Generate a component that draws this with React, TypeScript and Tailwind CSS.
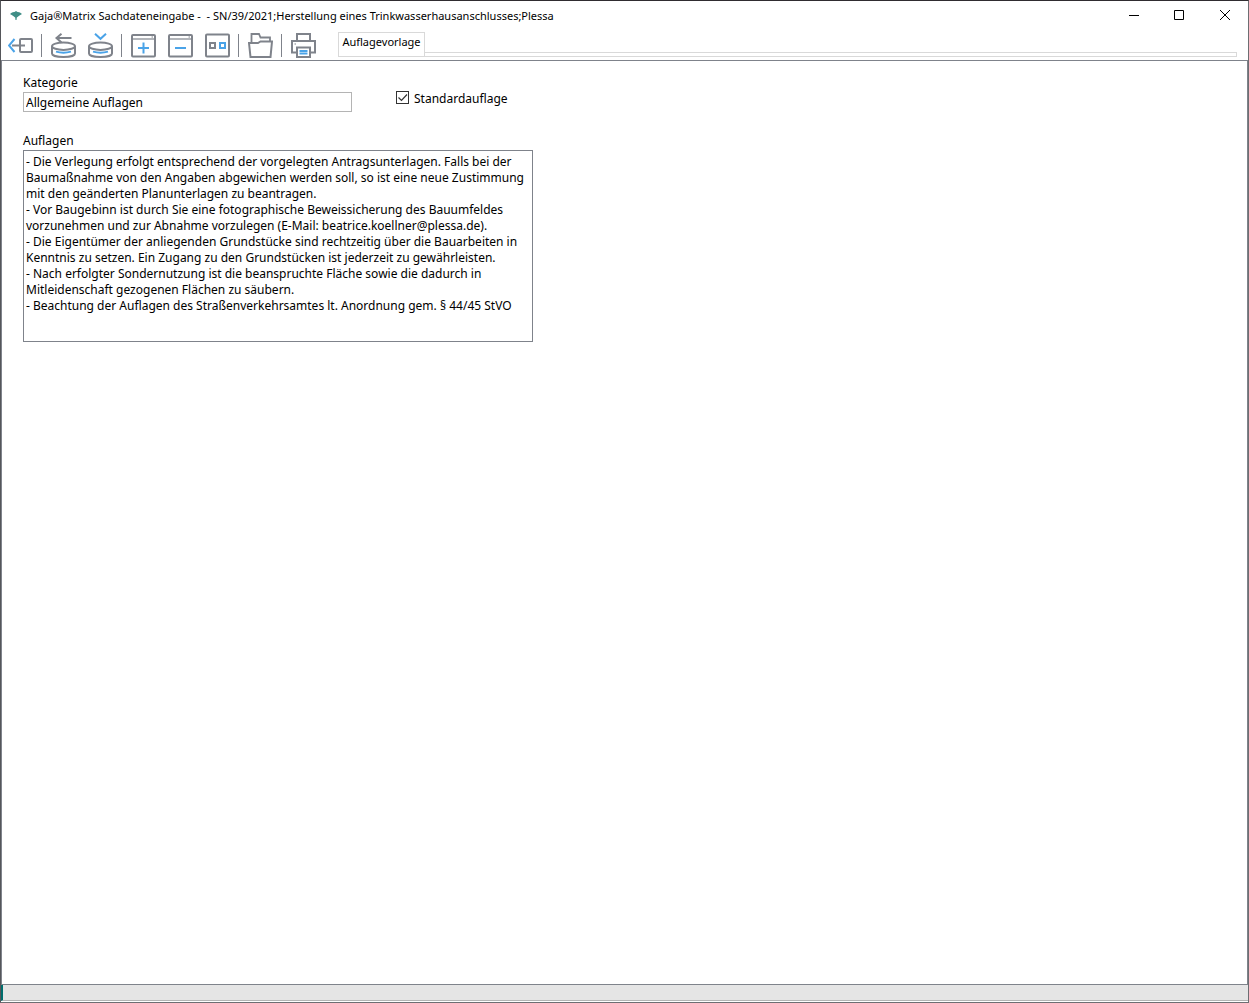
import React, { useState } from 'react';

const GRAY = '#7f838b';
const BLUE = '#4aa3e8';

const initialText = `- Die Verlegung erfolgt entsprechend der vorgelegten Antragsunterlagen. Falls bei der Baumaßnahme von den Angaben abgewichen werden soll, so ist eine neue Zustimmung mit den geänderten Planunterlagen zu beantragen.
- Vor Baugebinn ist durch Sie eine fotographische Beweissicherung des Bauumfeldes vorzunehmen und zur Abnahme vorzulegen (E-Mail: beatrice.koellner@plessa.de).
- Die Eigentümer der anliegenden Grundstücke sind rechtzeitig über die Bauarbeiten in Kenntnis zu setzen. Ein Zugang zu den Grundstücken ist jederzeit zu gewährleisten.
- Nach erfolgter Sondernutzung ist die beanspruchte Fläche sowie die dadurch in Mitleidenschaft gezogenen Flächen zu säubern.
- Beachtung der Auflagen des Straßenverkehrsamtes lt. Anordnung gem. § 44/45 StVO`;

function ToolButton({ label, children }: { label: string; children: React.ReactNode }) {
  return (
    <button type="button" aria-label={label} title={label} className="block h-[25px] w-[25px] shrink-0">
      <svg width="25" height="25" viewBox="0 0 25 25" fill="none" stroke={GRAY} strokeWidth="2">
        {children}
      </svg>
    </button>
  );
}

function Separator() {
  return <div className="mr-[9px] ml-2 h-[23px] w-px shrink-0 bg-[#7f838b]" />;
}

function DatabaseShape() {
  return (
    <>
      <ellipse cx="12.5" cy="13.2" rx="11.5" ry="3.7" />
      <path d="M1 13.2v7.300c0 2 5 3.500 11.500 3.500S24 22.500 24 20.500v-7.300" />
      <path d="M5 18.700c4 1.100 11 1.100 15 0" stroke={BLUE} strokeWidth="1.800" />
    </>
  );
}

function WindowShape() {
  return (
    <>
      <rect x="1" y="2" width="23" height="21.5" rx="1" />
      <path d="M1 6h23" strokeWidth="1.200" />
      <path d="M20.500 4h1.500" strokeWidth="1" />
    </>
  );
}

function TitleBar() {
  return (
    <header className="flex h-[30px] shrink-0 items-center bg-white pl-[9px]">
      <svg width="12" height="10" viewBox="0 0 12 10" className="shrink-0">
        <path d="M0 3C1.500 1.500 3 .8 4.500 1L6 0l1.500 1C9 .8 10.500 1.500 12 3L9.500 4.500 6.800 6.500 6.500 9h-1L5.200 6.500 2.500 4.500z" fill="#3f8e86" />
      </svg>
      <h1 className="ml-2 flex-1 truncate font-['Noto_Sans','Open_Sans',sans-serif] text-[11px] leading-4 whitespace-pre">
        Gaja®Matrix Sachdateneingabe -  - SN/39/2021;Herstellung eines Trinkwasserhausanschlusses;Plessa
      </h1>
      <div className="flex h-[29px] self-start">
        <button type="button" aria-label="Minimieren" className="flex w-[46px] items-center justify-center">
          <svg width="11" height="11" viewBox="0 0 11 11"><path d="M0 5.500h10" stroke="#000" /></svg>
        </button>
        <button type="button" aria-label="Maximieren" className="flex w-[45px] items-center justify-center">
          <svg width="11" height="11" viewBox="0 0 11 11"><path d="M.5.5h9v9h-9z" fill="none" stroke="#000" /></svg>
        </button>
        <button type="button" aria-label="Schließen" className="flex w-[46px] items-center justify-center">
          <svg width="11" height="11" viewBox="0 0 11 11"><path d="M0 0l10 10M10 0L0 10" stroke="#000" /></svg>
        </button>
      </div>
    </header>
  );
}

function Toolbar() {
  return (
    <div className="flex h-[29px] shrink-0 items-start bg-white pt-px pl-[7px]">
      <div className="flex items-center pt-px">
        <ToolButton label="Beenden">
          <rect x="12" y="6" width="12" height="13" rx="1" />
          <path d="M4 12.500h13" />
          <path d="M6.500 6L1 12.500l5.500 6.500" stroke={BLUE} />
        </ToolButton>
        <Separator />
        <div className="flex gap-3">
          <ToolButton label="Datensatz zurücksetzen">
            <DatabaseShape />
            <path d="M20.500 5H6M10.500.8L5.500 5l5 4.500" />
          </ToolButton>
          <ToolButton label="Datensatz speichern">
            <DatabaseShape />
            <path d="M7 .8l5.500 5 5.500-5" stroke={BLUE} />
          </ToolButton>
        </div>
        <Separator />
        <div className="flex gap-3">
          <ToolButton label="Neu">
            <WindowShape />
            <path d="M7 15h11M12.500 9.500v11" stroke={BLUE} />
          </ToolButton>
          <ToolButton label="Löschen">
            <WindowShape />
            <path d="M7 15h11" stroke={BLUE} />
          </ToolButton>
          <ToolButton label="Kopieren">
            <rect x="1" y="1.500" width="23" height="22" rx="1" />
            <rect x="5" y="10" width="5" height="5" />
            <rect x="15" y="10" width="5" height="5" stroke={BLUE} />
          </ToolButton>
        </div>
        <Separator />
        <ToolButton label="Öffnen">
          <path d="M3.500 9.500V1h7.500l1.500 3.500H22v4" strokeWidth="1.800" />
          <path d="M1 10h9l2.500-1.500H24L22.500 24h-20z" />
        </ToolButton>
        <Separator />
        <ToolButton label="Drucken">
          <path d="M6 8V1h13v7" />
          <path d="M6 19.500H1V8h23v11.500h-5" />
          <path d="M3.500 11h1.500" strokeWidth="1" />
          <path d="M6 14.500h13V24H6z" />
          <path d="M8.500 18h8M8.500 20.500h8" stroke={BLUE} />
        </ToolButton>
      </div>
      <div role="tablist" className="ml-[22px] flex h-[25px] flex-1 pr-[11px]">
        <button
          type="button"
          role="tab"
          aria-selected="true"
          className="w-[87px] shrink-0 border border-[#d9d9d9] pb-1.5 font-['Noto_Sans','Open_Sans',sans-serif] text-[11px] leading-4"
        >
          Auflagevorlage
        </button>
        <div className="h-[5px] flex-1 self-end border border-l-0 border-[#d9d9d9]" />
      </div>
    </div>
  );
}

export default function App() {
  const [category, setCategory] = useState('Allgemeine Auflagen');
  const [isDefault, setIsDefault] = useState(true);
  const [text, setText] = useState(initialText);

  return (
    <div className="flex min-h-screen flex-col border border-t-[#2f2c30] border-r-[#6d6e72] border-b-[#6d6e72] border-l-[#55565a] bg-white text-black">
      <TitleBar />
      <Toolbar />
      <main className="flex-1 border border-[#7f838b] px-[21px] pt-[14px] font-['Noto_Sans','DejaVu_Sans_Condensed',sans-serif] text-[12px] leading-4">
        <div className="flex items-start">
          <div className="w-[329px]">
            <label htmlFor="kategorie" className="block">Kategorie</label>
            <input
              id="kategorie"
              value={category}
              onChange={(e) => setCategory(e.target.value)}
              className="mt-px block h-5 w-full border border-[#b4b4b4] px-0.5 outline-none"
            />
          </div>
          <div className="mt-4 ml-11 flex items-start gap-[5px]">
            <span className="relative flex h-[13px] w-[13px]">
              <input
                id="standard"
                type="checkbox"
                checked={isDefault}
                onChange={(e) => setIsDefault(e.target.checked)}
                className="h-[13px] w-[13px] appearance-none border border-[#333]"
              />
              {isDefault && (
                <svg width="13" height="13" viewBox="0 0 13 13" className="pointer-events-none absolute inset-0">
                  <path d="M2.500 6.500l3 3 5.500-6" fill="none" stroke="#333" strokeWidth="1.200" />
                </svg>
              )}
            </span>
            <label htmlFor="standard">Standardauflage</label>
          </div>
        </div>

        <label htmlFor="auflagen" className="mt-[21px] block">Auflagen</label>
        <textarea
          id="auflagen"
          value={text}
          onChange={(e) => setText(e.target.value)}
          className="mt-px block h-48 w-[510px] resize-none overflow-hidden border border-[#7f838b] px-0.5 py-[3px] outline-none"
        />
      </main>
      <footer className="mb-px h-4 shrink-0 border-b border-l-2 border-[#b4b4b4] border-l-[#006d6d] bg-[#e5e5e5]" />
    </div>
  );
}
